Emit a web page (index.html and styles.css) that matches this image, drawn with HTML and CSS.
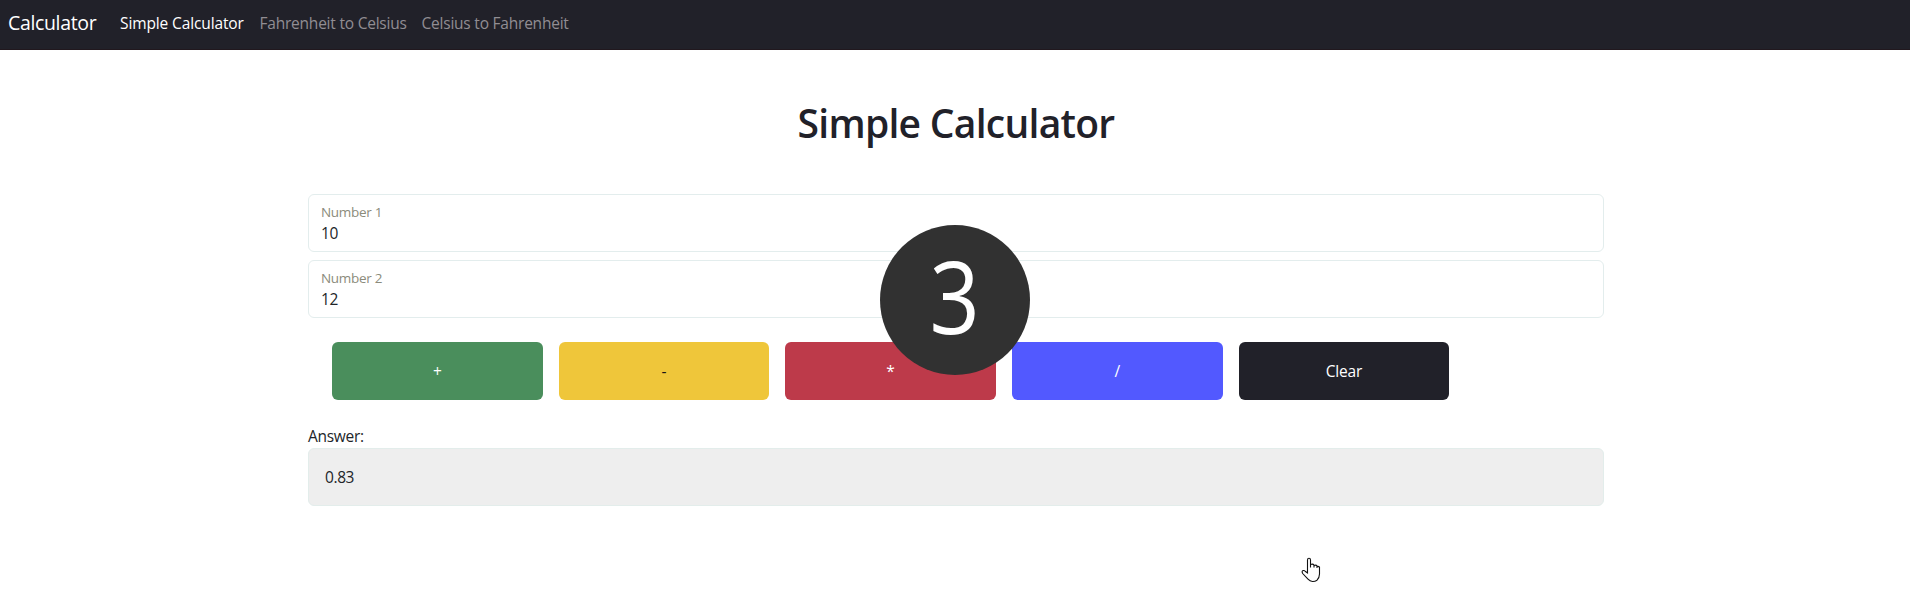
FILE: index.html
```
<!DOCTYPE html>
<html lang="en">
<head>
<meta charset="utf-8">
<title>Calculator</title>
<link rel="stylesheet" href="styles.css">
</head>
<body>
<nav class="navbar">
  <a class="brand">Calculator</a>
  <a class="nav-link active">Simple Calculator</a>
  <a class="nav-link f2c">Fahrenheit to Celsius</a>
  <a class="nav-link c2f">Celsius to Fahrenheit</a>
</nav>
<main class="container">
  <h1 class="title">Simple Calculator</h1>
  <div class="field"><label class="field-label">Number 1</label><span class="field-value">10</span></div>
  <div class="field"><label class="field-label">Number 2</label><span class="field-value">12</span></div>
  <div class="buttons">
    <button class="btn add">+</button>
    <button class="btn subtract">-</button>
    <button class="btn multiply">*</button>
    <button class="btn divide">/</button>
    <button class="btn clear">Clear</button>
  </div>
  <div class="answer-label"><span>Answer:</span></div>
  <output class="answer">0.83</output>
</main>
<div class="countdown"><span class="digit">3</span></div>
<svg class="pointer" width="20" height="26" viewBox="0 0 20 26"><path d="M6.5 16V3q0-1.800 1.500-1.800T9.500 3v7.500V7.500q2.700-1 3.500.8v2.200V8.500q2.200-1 3 .6v2V9.500q1.600-.5 2.500.7V17q0 3.500-2.500 6.200-2 1.400-4.500 1.300-2.500 0-4.500-2.300L1.700 16.500Q.3 14 2.200 13.500q1.300-.2 2.300 1z" fill="#fff" stroke="#111" stroke-width="1.100"/></svg>
</body>
</html>
```
FILE: styles.css
```
* { box-sizing: border-box; }
body {
  margin: 0;
  height: 600px;
  overflow: hidden;
  background: #fff;
  color: #212529;
  font-family: "Open Sans", "Noto Sans", sans-serif;
  font-size: 15.5px;
  line-height: 24px;
}
.navbar {
  display: flex;
  height: 50px;
  padding: 0 8px 4px;
  align-items: center;
  background: #212129;
  border-bottom: 1px solid #21181e;
}
.brand { width: 112px; color: #fff; font-size: 19.5px; letter-spacing: -0.35px; }
.nav-link { width: 139.500px; color: #918d93; letter-spacing: -0.22px; white-space: nowrap; }
.nav-link.active { color: #fff; letter-spacing: -0.12px; }
.nav-link.f2c { width: 162px; }
.container { width: 1296px; margin: 0 auto 0 308px; }
.title {
  margin: 0 0 47px;
  padding-top: 48px;
  font-size: 39px;
  font-weight: 600;
  line-height: 49px;
  letter-spacing: -0.72px;
  text-align: center;
  color: #212129;
}
.field {
  display: flex;
  flex-direction: column;
  height: 58px;
  margin-bottom: 8px;
  padding: 7px 12px;
  border: 1px solid #e3eded;
  border-radius: 6px;
}
.field-label { font-size: 13.500px; line-height: 21px; letter-spacing: -0.3px; color: #8b8b7b; }
.field-value { line-height: 21px; letter-spacing: -0.4px; }
.buttons { display: flex; gap: 16px; padding: 16px 0 0 24px; }
.btn {
  width: 210.670px;
  height: 58px;
  padding: 0;
  border: 0;
  border-radius: 6px;
  color: #fff;
  font: inherit;
}
.add { background: #4a8e5c; }
.subtract { background: #efc63a; color: #181418; }
.multiply { background: #bd3a4a; }
.divide { background: #5259ff; }
.clear { background: #212129; letter-spacing: -0.2px; }
.answer-label { margin-top: 24px; letter-spacing: -0.3px; }
.answer {
  display: flex;
  align-items: center;
  height: 58px;
  padding: 0 16px 0;
  border: 1px solid #e3edeb;
  border-radius: 6px;
  background: #eee;
  letter-spacing: -0.4px;
}
.countdown {
  position: absolute;
  top: 225px;
  left: 880px;
  display: flex;
  width: 150px;
  height: 150px;
  padding-bottom: 10px;
  align-items: center;
  justify-content: center;
  border-radius: 50%;
  background: #313131;
  color: #fff;
}
.digit { font-size: 100px; line-height: 140px; transform: scaleX(0.88); }
.pointer { position: absolute; top: 557px; left: 1301px; }
```
